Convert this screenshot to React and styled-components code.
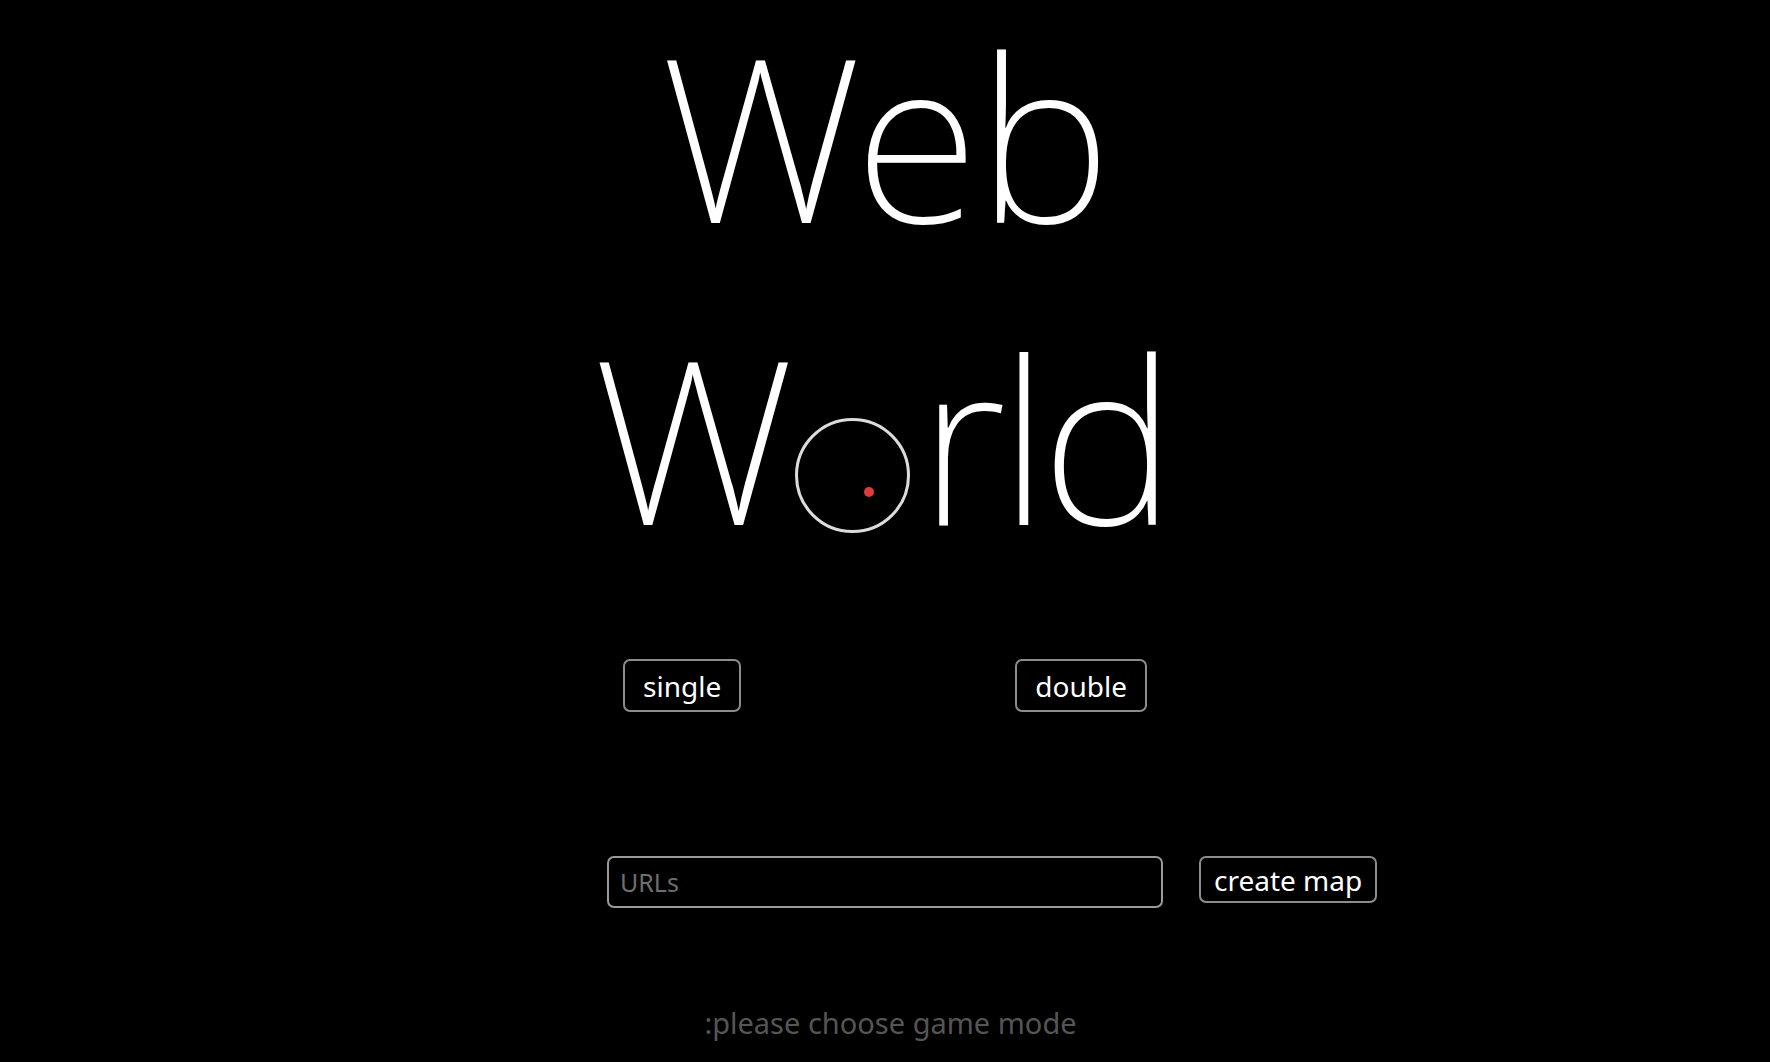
import React from 'react'
import styled, { createGlobalStyle } from 'styled-components'

const Global = createGlobalStyle`
  html, body { margin: 0; background: #000; }
  body { font-family: "Noto Sans", "Open Sans", sans-serif; color: #fff; }
`

const Page = styled.main`
  display: flex;
  flex-direction: column;
  align-items: center;
  min-height: 100vh;
  overflow: hidden;
`

const Title = styled.h1`
  margin: 0;
  font-weight: 200;
  font-size: 228px;
  line-height: 270px;
  letter-spacing: -2px;
  text-align: center;
  color: #fff;
`

const Line = styled.div`
  white-space: nowrap;

  & + & {
    margin-top: 32px;
  }
`

// "rld" after the globe, a little tighter than the font's default
const Tail = styled.span`
  letter-spacing: -7px;
  padding-right: 8px;
`

const Globe = styled.span`
  position: relative;
  display: inline-block;
  width: 115px;
  height: 115px;
  box-sizing: border-box;
  border: 3px solid #dcdcdc;
  border-radius: 50%;
  vertical-align: -8px;
  margin: 0 9px 0 3px;
`

const Dot = styled.span`
  position: absolute;
  left: 66px;
  top: 66px;
  width: 10px;
  height: 10px;
  border-radius: 50%;
  background: #e23b3b;
`

const Modes = styled.div`
  display: flex;
  gap: 274px;
  margin-top: 87px;
`

const Button = styled.button`
  box-sizing: border-box;
  height: ${({ small }) => (small ? '47px' : '53px')};
  padding: 0 ${({ small }) => (small ? '13px' : '18px')};
  background: #000;
  color: #fff;
  border: 2px solid #8c8c8c;
  border-radius: 7px;
  font-family: "Noto Sans", sans-serif;
  font-size: 28px;
  line-height: 1;
  cursor: pointer;
`

const MapRow = styled.div`
  display: grid;
  grid-template-columns: 1fr auto 1fr;
  align-items: start;
  width: 100%;
  margin-top: 144px;
`

const UrlInput = styled.input`
  grid-column: 2;
  box-sizing: border-box;
  width: 556px;
  height: 52px;
  padding: 0 11px;
  background: #000;
  color: #fff;
  border: 2px solid #9a9a9a;
  border-radius: 7px;
  font-family: "Noto Sans", sans-serif;
  font-size: 25px;
  outline: none;

  &::placeholder {
    color: #6e6e6e;
  }
`

const MapButton = styled(Button)`
  justify-self: start;
  margin-left: 36px;
`

const Status = styled.p`
  margin: 96px 0 0 11px;
  font-size: 29px;
  line-height: 38px;
  color: #555;
`

export default function App() {
  return (
    <>
      <Global />
      <Page>
        <Title>
          <Line>Web</Line>
          <Line>
            W<Globe><Dot /></Globe><Tail>rld</Tail>
          </Line>
        </Title>
        <Modes>
          <Button>single</Button>
          <Button>double</Button>
        </Modes>
        <MapRow>
          <UrlInput placeholder="URLs" />
          <MapButton small>create map</MapButton>
        </MapRow>
        <Status>:please choose game mode</Status>
      </Page>
    </>
  )
}
